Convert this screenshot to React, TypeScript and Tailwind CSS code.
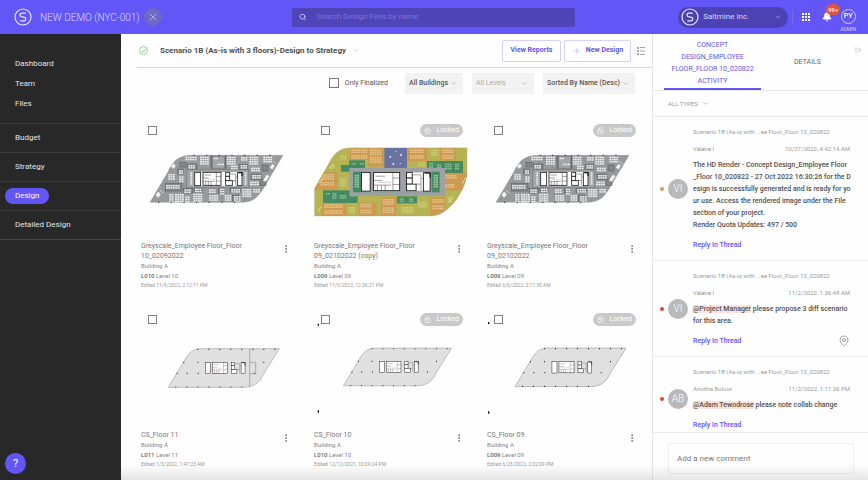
import { ReactNode } from "react";
import {
  Bell,
  Check,
  ChevronDown,
  LockKeyhole,
  MapPin,
  MoreVertical,
  Plus,
  Search,
  X,
} from "lucide-react";

type Box = [number, number, number, number];

// desk groups of the furnished floor: x, y, columns, rows
const DESKS: Box[] = [
  [166, 125, 5, 2],
  [210, 125, 4, 4],
  [290, 125, 4, 4],
  [333, 126, 3, 2],
  [358, 125, 4, 4],
  [400, 125, 4, 3],
  [175, 150, 3, 2],
  [303, 152, 3, 2],
  [332, 150, 3, 2],
  [363, 158, 4, 2],
  [147, 166, 2, 2],
  [115, 177, 3, 3],
  [148, 184, 2, 3],
  [366, 180, 4, 2],
  [108, 210, 6, 2],
  [163, 223, 3, 2],
  [195, 221, 3, 2],
  [118, 237, 2, 4],
  [135, 237, 4, 4],
  [166, 244, 2, 3],
  [190, 236, 4, 4],
  [237, 223, 3, 2],
  [238, 240, 4, 3],
  [270, 221, 2, 3],
  [284, 240, 3, 3],
  [304, 222, 4, 2],
  [312, 243, 3, 3],
  [337, 222, 4, 4],
  [370, 222, 3, 2],
  [360, 200, 4, 2],
];

const DARK: Box[] = [
  [150, 142, 18, 14],
  [173, 147, 28, 15],
  [243, 122, 3, 38],
  [286, 122, 2, 38],
  [327, 148, 26, 16],
  [396, 150, 18, 18],
  [143, 162, 18, 15],
  [106, 206, 50, 22],
  [160, 220, 27, 14],
  [192, 218, 24, 14],
  [265, 218, 16, 18],
  [300, 219, 32, 13],
  [307, 240, 20, 20],
  [178, 168, 12, 48],
  [341, 168, 12, 48],
  [390, 192, 18, 20],
  [363, 177, 30, 17],
];

const ZONES: [string, number, number, number, number][] = [
  ["#cd9a50", 134, 98, 56, 37],
  ["#cd9a50", 190, 98, 47, 57],
  ["#6872a0", 238, 98, 68, 61],
  ["#cd9a50", 308, 98, 58, 40],
  ["#cd9a50", 405, 98, 48, 38],
  ["#cd9a50", 20, 172, 78, 52],
  ["#458a60", 108, 150, 26, 20],
  ["#458a60", 132, 136, 48, 23],
  ["#458a60", 366, 138, 108, 36],
  ["#458a60", 54, 226, 104, 38],
  ["#cd9a50", 50, 264, 74, 40],
  ["#cd9a50", 160, 262, 55, 42],
  ["#cd9a50", 228, 246, 46, 58],
  ["#458a60", 276, 244, 60, 21],
  ["#cd9a50", 416, 174, 70, 52],
  ["#cd9a50", 376, 246, 44, 58],
];

const ZONE_DESKS: Box[] = [
  [139, 103, 7, 2],
  [139, 120, 7, 2],
  [195, 103, 5, 3],
  [195, 126, 5, 3],
  [315, 103, 6, 2],
  [315, 120, 6, 2],
  [412, 103, 5, 2],
  [412, 120, 5, 2],
  [46, 177, 6, 3],
  [46, 201, 6, 2],
  [58, 268, 8, 2],
  [58, 286, 8, 2],
  [166, 266, 5, 2],
  [166, 284, 5, 2],
  [233, 252, 5, 3],
  [233, 277, 5, 3],
  [382, 252, 5, 2],
  [382, 272, 5, 2],
  [421, 180, 5, 2],
  [421, 207, 4, 2],
];

const LOUNGE_DESKS: Box[] = [
  [378, 104, 3, 3],
  [104, 122, 3, 2],
  [104, 190, 3, 4],
  [130, 276, 3, 3],
  [290, 276, 5, 3],
  [340, 260, 4, 3],
  [428, 245, 2, 3],
  [340, 143, 3, 2],
];

const ROOM_DESKS: Box[] = [
  [140, 144, 2, 1],
  [164, 144, 2, 1],
  [62, 234, 2, 1],
  [82, 234, 2, 3],
  [104, 240, 3, 2],
  [134, 234, 3, 2],
  [284, 250, 2, 2],
  [312, 250, 2, 2],
  [372, 143, 2, 3],
  [396, 148, 2, 2],
  [420, 146, 3, 3],
  [450, 146, 2, 3],
];

function Desks({ items, fill }: { items: Box[]; fill: string }) {
  return (
    <g fill={fill}>
      {items.flatMap(([x, y, cols, rows]) =>
        Array.from({ length: cols * rows }, (_, i) => (
          <rect
            key={`${x}-${y}-${i}`}
            x={x + (i % cols) * 7}
            y={y + Math.floor(i / cols) * 6.5}
            width="5.5"
            height="4.5"
          />
        )),
      )}
    </g>
  );
}

// elevator and stair core, drawn on a 146 x 40 field
function Core({ wall = 2.5 }: { wall?: number }) {
  return (
    <g stroke="#1c1c1c" fill="#fff" strokeWidth={wall}>
      <rect x="1" y="1" width="18" height="40" />
      <rect x="26" y="1" width="54" height="39" />
      <path
        d="M27 18H44M66 1V40M66 13H80M66 27H80M27 28H62M34 28V40M42 28V40M50 28V40M30 9H50"
        strokeWidth={wall / 2}
      />
      <path d="M34 22H62" stroke="#c98a8a" strokeWidth="1" />
      <rect x="94" y="1" width="12" height="12" />
      <rect x="94" y="13" width="12" height="13" />
      <rect x="94" y="26" width="20" height="14" />
      <path
        d="M106 6H124V26M114 26H124V40M132 1V14H126"
        fill="none"
        strokeWidth={wall / 2}
      />
      <rect x="129" y="2" width="14" height="39" />
      <path d="M132 2H143V12" strokeWidth={wall * 1.4} fill="none" />
    </g>
  );
}

function FurnishedPlan() {
  return (
    <>
      <path
        d="M60 262L112 174C129 138 144 121 188 121H459L409 205C388 244 372 262 334 262Z"
        fill="#97999c"
        stroke="#808285"
        strokeWidth="1"
      />
      <g fill="#85878a" stroke="#55575a" strokeWidth="1.5">
        {DARK.map(([x, y, w, h]) => (
          <rect key={`${x}-${y}`} x={x} y={y} width={w} height={h} />
        ))}
      </g>
      <path
        d="M170 164H356V218H170ZM247 124H284V160H247Z"
        fill="#a2a5a9"
        stroke="#66686b"
        strokeWidth="1.5"
      />
      <Desks items={DESKS} fill="#f0f0f0" />
      <Desks
        items={[
          [181, 172, 1, 6],
          [344, 172, 1, 6],
          [251, 128, 2, 1],
          [262, 146, 3, 1],
        ]}
        fill="#f1f1f1"
      />
      <path
        d="M78 241L84 231L91 237L85 247ZM90 226L101 235M124 153L132 146L136 155L128 160ZM400 196L411 180L417 184L407 199ZM421 158L427 148L433 152L427 162ZM430 138L440 148"
        fill="#f5f5f5"
        stroke="#f5f5f5"
        strokeWidth="2"
      />
      <path
        d="M84 262H330M190 121H450"
        stroke="#303030"
        strokeWidth="3"
        strokeDasharray="4 34"
      />
      <g transform="translate(193 171)">
        <rect width="144" height="42" fill="#fff" />
        <Core />
      </g>
    </>
  );
}

function ZonedPlan() {
  return (
    <>
      <clipPath id="zoned">
        <path d="M28 303V222L70 148C86 116 102 98 140 98H486V178C480 225 436 303 376 303Z" />
      </clipPath>
      <g clipPath="url(#zoned)">
        <rect x="27" y="97" width="460" height="207" fill="#b5b352" />
        {ZONES.map(([fill, x, y, w, h]) => (
          <rect key={`${x}-${y}`} x={x} y={y} width={w} height={h} fill={fill} />
        ))}
        <Desks items={ZONE_DESKS} fill="#e4c28c" />
        <Desks items={LOUNGE_DESKS} fill="#cfcd7c" />
        <Desks items={ROOM_DESKS} fill="#8dbd94" />
        <path
          d="M38 205L58 190M74 156L84 148L88 154L78 161ZM38 290L50 274M472 205L482 188M430 262L445 246"
          stroke="#e3dca0"
          strokeWidth="3"
          fill="none"
        />
        <g fill="#e4e6f2">
          <circle cx="256" cy="126" r="3" />
          <circle cx="272" cy="110" r="2" />
          <circle cx="288" cy="120" r="3" />
          <circle cx="265" cy="147" r="3" />
          <circle cx="286" cy="145" r="2" />
        </g>
      </g>
      <rect x="134" y="159" width="286" height="84" fill="#9da1a6" />
      <rect x="144" y="170" width="260" height="62" fill="#458a60" />
      <rect x="168" y="169" width="212" height="64" fill="#9da1a6" />
      <Desks
        items={[
          [149, 180, 2, 6],
          [386, 180, 2, 6],
        ]}
        fill="#a5cba5"
      />
      <g transform="translate(168 171) scale(1.45 1.4)">
        <rect x="94" y="1" width="35" height="39" fill="#fff" />
        <Core wall={1.8} />
      </g>
      <path
        d="M28 303V222L70 148C86 116 102 98 140 98H486V178C480 225 436 303 376 303Z"
        fill="none"
        stroke="#a9a77b"
        strokeWidth="1"
      />
    </>
  );
}

function ShellPlan({ divided = false }: { divided?: boolean }) {
  return (
    <>
      <path
        d="M115 262L162 184C174 160 188 146 214 146H448L402 220C389 248 372 262 340 262Z"
        fill="#e0e0e0"
        stroke="#8b8b8b"
        strokeWidth="1.5"
      />
      <path
        d="M136 261H340M202 148H440M170 220H232M372 220H400M202 187H222M400 187H428M140 220H145M160 187H164"
        stroke="#333"
        strokeWidth="3.5"
        strokeDasharray="3 30"
      />
      {divided && (
        <path
          d="M359 146V187H377V221H359V260M359 187V221"
          fill="none"
          stroke="#777"
          strokeWidth="1.5"
        />
      )}
      <g transform="translate(225 186) scale(.84 .86)">
        <Core wall={1.7} />
      </g>
    </>
  );
}

const CARDS: {
  name: string;
  level: string;
  edited: string;
  locked: boolean;
  viewBox: string;
  plan: ReactNode;
}[] = [
  {
    name: "Greyscale_Employee Floor_Floor 10_02092022",
    level: "10",
    edited: "11/9/2022, 2:12:11 PM",
    locked: false,
    viewBox: "33 66 459 300",
    plan: <FurnishedPlan />,
  },
  {
    name: "Greyscale_Employee Floor_Floor 09_02102022 (copy)",
    level: "09",
    edited: "11/9/2022, 12:36:21 PM",
    locked: true,
    viewBox: "27 66 459 300",
    plan: <ZonedPlan />,
  },
  {
    name: "Greyscale_Employee Floor_Floor 09_02102022",
    level: "09",
    edited: "6/6/2022, 3:11:30 AM",
    locked: true,
    viewBox: "33 66 459 300",
    plan: <FurnishedPlan />,
  },
  {
    name: "CS_Floor 11",
    level: "11",
    edited: "1/3/2022, 1:47:23 AM",
    locked: false,
    viewBox: "33 78 459 300",
    plan: <ShellPlan divided />,
  },
  {
    name: "CS_Floor 10",
    level: "10",
    edited: "12/12/2021, 10:09:24 PM",
    locked: true,
    viewBox: "27 78 459 300",
    plan: (
      <>
        <path d="M38 71h4v6h-4zM38 331h4v7h-4z" fill="#111" />
        <g transform="translate(3 2) scale(.975)">
          <ShellPlan />
        </g>
      </>
    ),
  },
  {
    name: "CS_Floor 09",
    level: "09",
    edited: "6/23/2022, 2:02:09 PM",
    locked: true,
    viewBox: "33 78 459 300",
    plan: (
      <>
        <path d="M36 66h4v6h-4zM36 334h4v7h-4z" fill="#111" />
        <g transform="translate(2 -2)">
          <ShellPlan />
        </g>
      </>
    ),
  },
];

const COMMENTS = [
  {
    initials: "VI",
    dot: "bg-[#dd9a55]",
    author: "Valene I",
    time: "10/27/2022, 4:42:14 AM",
    mention: "",
    lines: [
      "The HD Render - Concept Design_Employee Floor",
      "_Floor 10_020822 - 27 Oct 2022 16:30:26 for the D",
      "esign is successfully generated and is ready for yo",
      "ur use. Access the rendered image under the File",
      "section of your project.",
      "Render Quota Updates: 497 / 500",
    ],
    pinned: false,
  },
  {
    initials: "VI",
    dot: "bg-[#dd4a2e]",
    author: "Valene I",
    time: "11/2/2022, 1:36:48 AM",
    mention: "@Project Manager",
    lines: [" please propose 3 diff scenario", "for this area."],
    pinned: true,
  },
  {
    initials: "AB",
    dot: "bg-[#dd4a2e]",
    author: "Anvitha Boloor",
    time: "11/2/2022, 1:11:26 PM",
    mention: "@Adam Tewodrose",
    lines: [" please note collab change"],
    pinned: false,
  },
];

function Logo({ className }: { className: string }) {
  return (
    <svg className={className} viewBox="0 0 18 18" fill="none" stroke="#e9e7ff">
      <circle cx="9" cy="9" r="8" strokeWidth="1.2" />
      <path
        d="M11.8 5.2H8C5.4 5.2 5.4 8.7 8 8.9L10 9.1C12.4 9.4 12.4 12.8 10 12.8H6.2"
        strokeWidth="1.2"
      />
    </svg>
  );
}

function Header() {
  return (
    <header className="flex h-[34px] shrink-0 items-center bg-[#6256f6] text-white">
      <div className="flex w-[292px] shrink-0 items-center pl-3.5">
        <Logo className="size-[18px]" />
        <h1 className="ml-2 text-[10px] font-light text-[#dedbff]">
          NEW DEMO (NYC-001)
        </h1>
        <button
          aria-label="Close project"
          className="ml-1 flex size-[18px] items-center justify-center rounded-full bg-[#6f68c4]"
        >
          <X className="size-3 text-[#cfccf5]" strokeWidth={1.5} />
        </button>
      </div>
      <label className="flex h-[19px] max-w-[283px] flex-1 items-center rounded-xs bg-[#4f44b8] pl-[7px]">
        <Search className="size-2 text-[#d5d2fa]" strokeWidth={2.5} />
        <input
          type="search"
          aria-label="Search design files"
          placeholder="Search Design Files by name"
          className="ml-2.5 w-full bg-transparent text-[8px] outline-none placeholder:text-[#7b72de]"
        />
      </label>
      <div className="ml-auto flex items-center pr-3">
        <button className="flex h-[21px] w-[110px] items-center rounded-full bg-[#4c42b4] pr-1.5 pl-[3px]">
          <Logo className="size-[18px]" />
          <span className="ml-1 text-[8px] text-[#dad7fb]">Saltmine Inc.</span>
          <ChevronDown className="ml-auto size-2 text-[#b9b4ee]" />
        </button>
        <span className="ml-1 h-3.5 w-px bg-[#756bf3]" />
        <button aria-label="Apps" className="ml-2">
          <svg className="size-2.5" viewBox="0 0 10 10" fill="#fff">
            {[0, 1, 2].map((r) =>
              [0, 1, 2].map((c) => (
                <rect
                  key={`${r}${c}`}
                  x={1 + c * 3}
                  y={1 + r * 3}
                  width="2"
                  height="2"
                />
              )),
            )}
          </svg>
        </button>
        <button aria-label="Notifications" className="relative ml-[11px]">
          <Bell className="size-2.5" fill="white" />
          <span className="absolute -top-2 left-1 rounded-full bg-[#df5340] px-0.5 text-[6px] leading-[11px] font-medium text-[#ffe9e2]">
            99+
          </span>
        </button>
        <div className="ml-2 flex flex-col items-center pt-2">
          <span className="flex size-[15px] items-center justify-center rounded-full border border-[#cfcbff] text-[7px] leading-none font-medium">
            PY
          </span>
          <span className="text-[5px] leading-[10px] text-[#d5d2ff]">
            ADMIN
          </span>
        </div>
      </div>
    </header>
  );
}

function Sidebar() {
  return (
    <aside className="flex w-[121px] shrink-0 flex-col bg-[#282828] text-[8px] text-[#e4e4e4]">
      <nav>
        <div className="flex flex-col border-b border-[#3c3c3c] pt-5 pb-[9px] pl-[15px] leading-5">
          <a href="#dashboard">Dashboard</a>
          <a href="#team">Team</a>
          <a href="#files">Files</a>
        </div>
        <a
          href="#budget"
          className="flex h-[29px] items-center border-b border-[#3c3c3c] pl-[15px]"
        >
          Budget
        </a>
        <a
          href="#strategy"
          className="flex h-[29px] items-center border-b border-[#3c3c3c] pl-[15px]"
        >
          Strategy
        </a>
        <a
          href="#design"
          className="flex h-[29px] items-center border-b border-[#3c3c3c] pl-[5px]"
        >
          <span className="rounded-full bg-[#6256f6] px-2.5 leading-4 text-white">
            Design
          </span>
        </a>
        <a
          href="#detailed"
          className="flex h-[29px] items-center border-b border-[#4a4a4a] pl-[15px]"
        >
          Detailed Design
        </a>
      </nav>
      <button
        aria-label="Help"
        className="mt-auto mb-1.5 ml-[5px] size-[21px] rounded-full bg-[#6256f6] text-[11px] leading-none text-white"
      >
        ?
      </button>
    </aside>
  );
}

function FilterSelect({ label, className }: { label: string; className: string }) {
  return (
    <div className="relative flex">
      <select
        aria-label={label}
        className={`h-[21px] appearance-none bg-[#f2f2f2] pl-1 text-[7px] outline-none ${className}`}
      >
        <option>{label}</option>
      </select>
      <ChevronDown className="pointer-events-none absolute top-[7px] right-1.5 size-[7px] text-[#999]" />
    </div>
  );
}

function Main() {
  return (
    <main className="min-w-0 flex-1 overflow-hidden bg-[#fefefe]">
      <div className="ml-4 flex h-[34px] items-center border-b border-[#d6d6d6]">
        <span className="ml-0.5 flex size-[9px] items-center justify-center rounded-full border border-[#8fd699]">
          <Check className="size-1.5 text-[#55bb66]" strokeWidth={3} />
        </span>
        <h2 className="ml-3 text-[8px] font-bold text-[#505050]">
          Scenario 1B (As-is with 3 floors)-Design to Strategy
        </h2>
        <ChevronDown className="ml-1.5 size-[7px] text-[#bbb]" />
        <div className="ml-auto flex items-center pr-1.5 text-[7px] font-bold text-[#6256e8]">
          <button className="h-[22px] w-[59px] rounded-xs border border-[#d5d1fb]">
            View Reports
          </button>
          <button className="ml-[3px] flex h-[22px] w-[67px] items-center justify-center gap-1 rounded-xs border border-[#d5d1fb]">
            <Plus className="size-2.5 text-[#bab5f3]" strokeWidth={1.5} />
            New Design
          </button>
          <button aria-label="List view" className="ml-[5px]">
            <svg className="size-2.5" viewBox="0 0 10 10" fill="#a5a5a5">
              <path d="M1 1h2v2H1zM4 1h5v1H4zM1 4h2v2H1zM4 4.5h5v1H4zM1 7h2v2H1zM4 8h5v1H4z" />
            </svg>
          </button>
        </div>
      </div>

      <div className="flex h-[30px] items-center justify-end pr-[17px] text-[#555]">
        <label className="mr-[17px] flex items-center gap-1.5 text-[7px]">
          <input
            type="checkbox"
            className="size-[10px] appearance-none border border-[#777] bg-white"
          />
          Only Finalized
        </label>
        <div className="flex gap-[9px]">
          <FilterSelect
            label="All Buildings"
            className="w-[58px] font-medium"
          />
          <FilterSelect label="All Levels" className="w-[62px] text-[#aaa]" />
          <FilterSelect
            label="Sorted By Name (Desc)"
            className="w-[92px] font-medium"
          />
        </div>
      </div>

      <div className="grid grid-cols-3 gap-x-5 gap-y-6 pt-[26px] pr-3 pl-5">
        {CARDS.map((card) => (
          <article key={card.name}>
            <div className="flex h-[13px] items-center justify-between pr-1 pl-[7px]">
              <input
                type="checkbox"
                aria-label={`Select ${card.name}`}
                className="size-[9px] appearance-none border border-[#808080] bg-white"
              />
              {card.locked && (
                <span className="flex h-[13px] items-center gap-[5px] rounded-full bg-[#c9c9c9] px-1 text-[7px] text-white">
                  <LockKeyhole className="size-[7px]" />
                  Locked
                </span>
              )}
            </div>
            <svg className="w-full overflow-visible" viewBox={card.viewBox}>
              {card.plan}
            </svg>
            <div className="flex justify-between pt-1 text-[7px] leading-[10px] text-[#858585]">
              <div>
                <h3 className="max-w-[120px] text-[#777]">{card.name}</h3>
                <p className="text-[6px]">Building A</p>
                <p className="text-[6px]">
                  <b className="font-medium text-[#666]">L0{card.level}</b>{" "}
                  Level {card.level}
                </p>
                <p className="text-[5px] leading-2 text-[#999]">
                  Edited {card.edited}
                </p>
              </div>
              <button
                aria-label={`Options for ${card.name}`}
                className="mt-[3px] mr-[3px] self-start"
              >
                <MoreVertical className="size-2.5 text-[#666]" />
              </button>
            </div>
          </article>
        ))}
      </div>
    </main>
  );
}

function ActivityPanel() {
  return (
    <section className="flex w-[216px] shrink-0 flex-col border-l border-[#e6e6e6] bg-[#fefefe]">
      <div className="flex h-[57px] shrink-0 border-b border-[#e8e8e8] pl-[11px] text-[7px] leading-3">
        <button className="w-[97px] border-b-2 border-[#6256f6] px-1 pt-1 text-[#6256e8]">
          CONCEPT DESIGN_EMPLOYEE FLOOR_FLOOR 10_020822 ACTIVITY
        </button>
        <button className="flex-1 text-[#666]">DETAILS</button>
        <button aria-label="Collapse panel" className="mt-3 mr-1.5 self-start">
          <svg
            className="size-2"
            viewBox="0 0 8 8"
            fill="none"
            stroke="#bbb"
            strokeWidth=".8"
          >
            <path d="M2 1V7M4 2L7 4L4 6" />
          </svg>
        </button>
      </div>
      <button className="flex h-[26px] shrink-0 items-center gap-1 border-b border-[#e8e8e8] pl-[15px] text-[6px] text-[#999]">
        ALL TYPES
        <ChevronDown className="size-[7px]" />
      </button>

      <div className="min-h-0 flex-1 overflow-hidden">
        {COMMENTS.map((comment) => (
          <article
            key={comment.time}
            className="flex items-center border-b border-[#ececec] py-[9px] pr-[18px] pl-[7px]"
          >
            <span className={`size-1 shrink-0 rounded-full ${comment.dot}`} />
            <span className="ml-1 flex size-5 shrink-0 items-center justify-center rounded-full bg-[#b9b9b9] text-[10px] font-light text-white">
              {comment.initials}
            </span>
            <div className="ml-[5px] min-w-0 flex-1 text-[7px] leading-3 whitespace-pre">
              <p className="text-[6px] text-[#9c9c9c]">
                Scenario 1B (As-is with ...ee Floor_Floor 10_020822
              </p>
              <div className="mt-[5px] flex justify-between text-[6px] text-[#999]">
                <span>{comment.author}</span>
                <time>{comment.time}</time>
              </div>
              <p className="mt-1 font-medium text-[#505050]">
                {comment.lines.map((line, i) => (
                  <span key={line} className="block">
                    {i === 0 && comment.mention && (
                      <mark className="bg-[#fbe3dc] text-inherit">
                        {comment.mention}
                      </mark>
                    )}
                    {line}
                  </span>
                ))}
              </p>
              <div className="mt-2 flex h-3 items-center justify-between">
                <a href="#reply" className="font-medium text-[#6256f6]">
                  Reply In Thread
                </a>
                {comment.pinned && (
                  <MapPin className="size-3 text-[#888]" strokeWidth={1.5} />
                )}
              </div>
            </div>
          </article>
        ))}
      </div>

      <div className="shrink-0 border-t border-[#ececec] pt-2.5 pr-3.5 pb-1.5 pl-[15px]">
        <input
          aria-label="Add a new comment"
          placeholder="Add a new comment"
          className="h-[31px] w-full rounded-xs border border-[#efefef] bg-transparent px-2 text-[8px] outline-none placeholder:text-[#777]"
        />
      </div>
    </section>
  );
}

export default function App() {
  return (
    <div className="flex h-screen flex-col overflow-hidden font-[Roboto,sans-serif]">
      <Header />
      <div className="relative flex min-h-0 flex-1">
        <Sidebar />
        <Main />
        <ActivityPanel />
        <div className="pointer-events-none absolute right-0 bottom-0 left-[121px] h-4 bg-linear-to-t from-black/10 to-transparent" />
      </div>
    </div>
  );
}
